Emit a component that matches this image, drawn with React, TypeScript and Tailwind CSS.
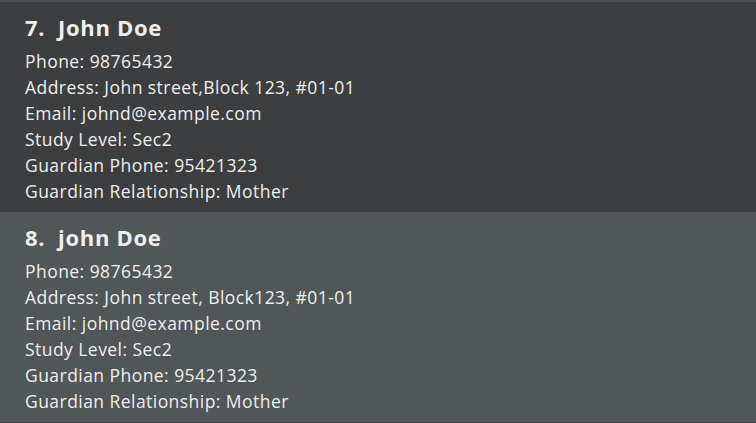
const people = [
  {
    id: 7,
    name: "John Doe",
    phone: "98765432",
    address: "John street,Block 123, #01-01",
    email: "johnd@example.com",
    level: "Sec2",
    guardianPhone: "95421323",
    relationship: "Mother",
  },
  {
    id: 8,
    name: "john Doe",
    phone: "98765432",
    address: "John street, Block123, #01-01",
    email: "johnd@example.com",
    level: "Sec2",
    guardianPhone: "95421323",
    relationship: "Mother",
  },
];

function PersonCard({ person, selected }: { person: (typeof people)[number]; selected: boolean }) {
  return (
    <div className={`h-[210px] pl-[25px] pt-[10px] ${selected ? "bg-[#515658]" : "bg-[#3c3e3f]"}`}>
      <div className="flex items-center h-[30px] text-[22px] font-bold tracking-[0.7px] text-[#eeeeee]">
        <span className="w-[33px]">{person.id}.</span>
        <span>{person.name}</span>
      </div>
      <div className="mt-[6px] text-[17.5px] leading-[26px] tracking-[0.45px] text-[#eeeeee]">
        <p>Phone: {person.phone}</p>
        <p>Address: {person.address}</p>
        <p>Email: {person.email}</p>
        <p>Study Level: {person.level}</p>
        <p>Guardian Phone: {person.guardianPhone}</p>
        <p>Guardian Relationship: {person.relationship}</p>
      </div>
    </div>
  );
}

export default function App() {
  return (
    <div className="w-[756px] h-[423px] overflow-hidden bg-[#3c3e3f] border-t-2 border-[#4d5354] font-['Open_Sans','Noto_Sans',sans-serif]">
      {people.map((p, i) => (
        <PersonCard key={p.id} person={p} selected={i === 1} />
      ))}
    </div>
  );
}
